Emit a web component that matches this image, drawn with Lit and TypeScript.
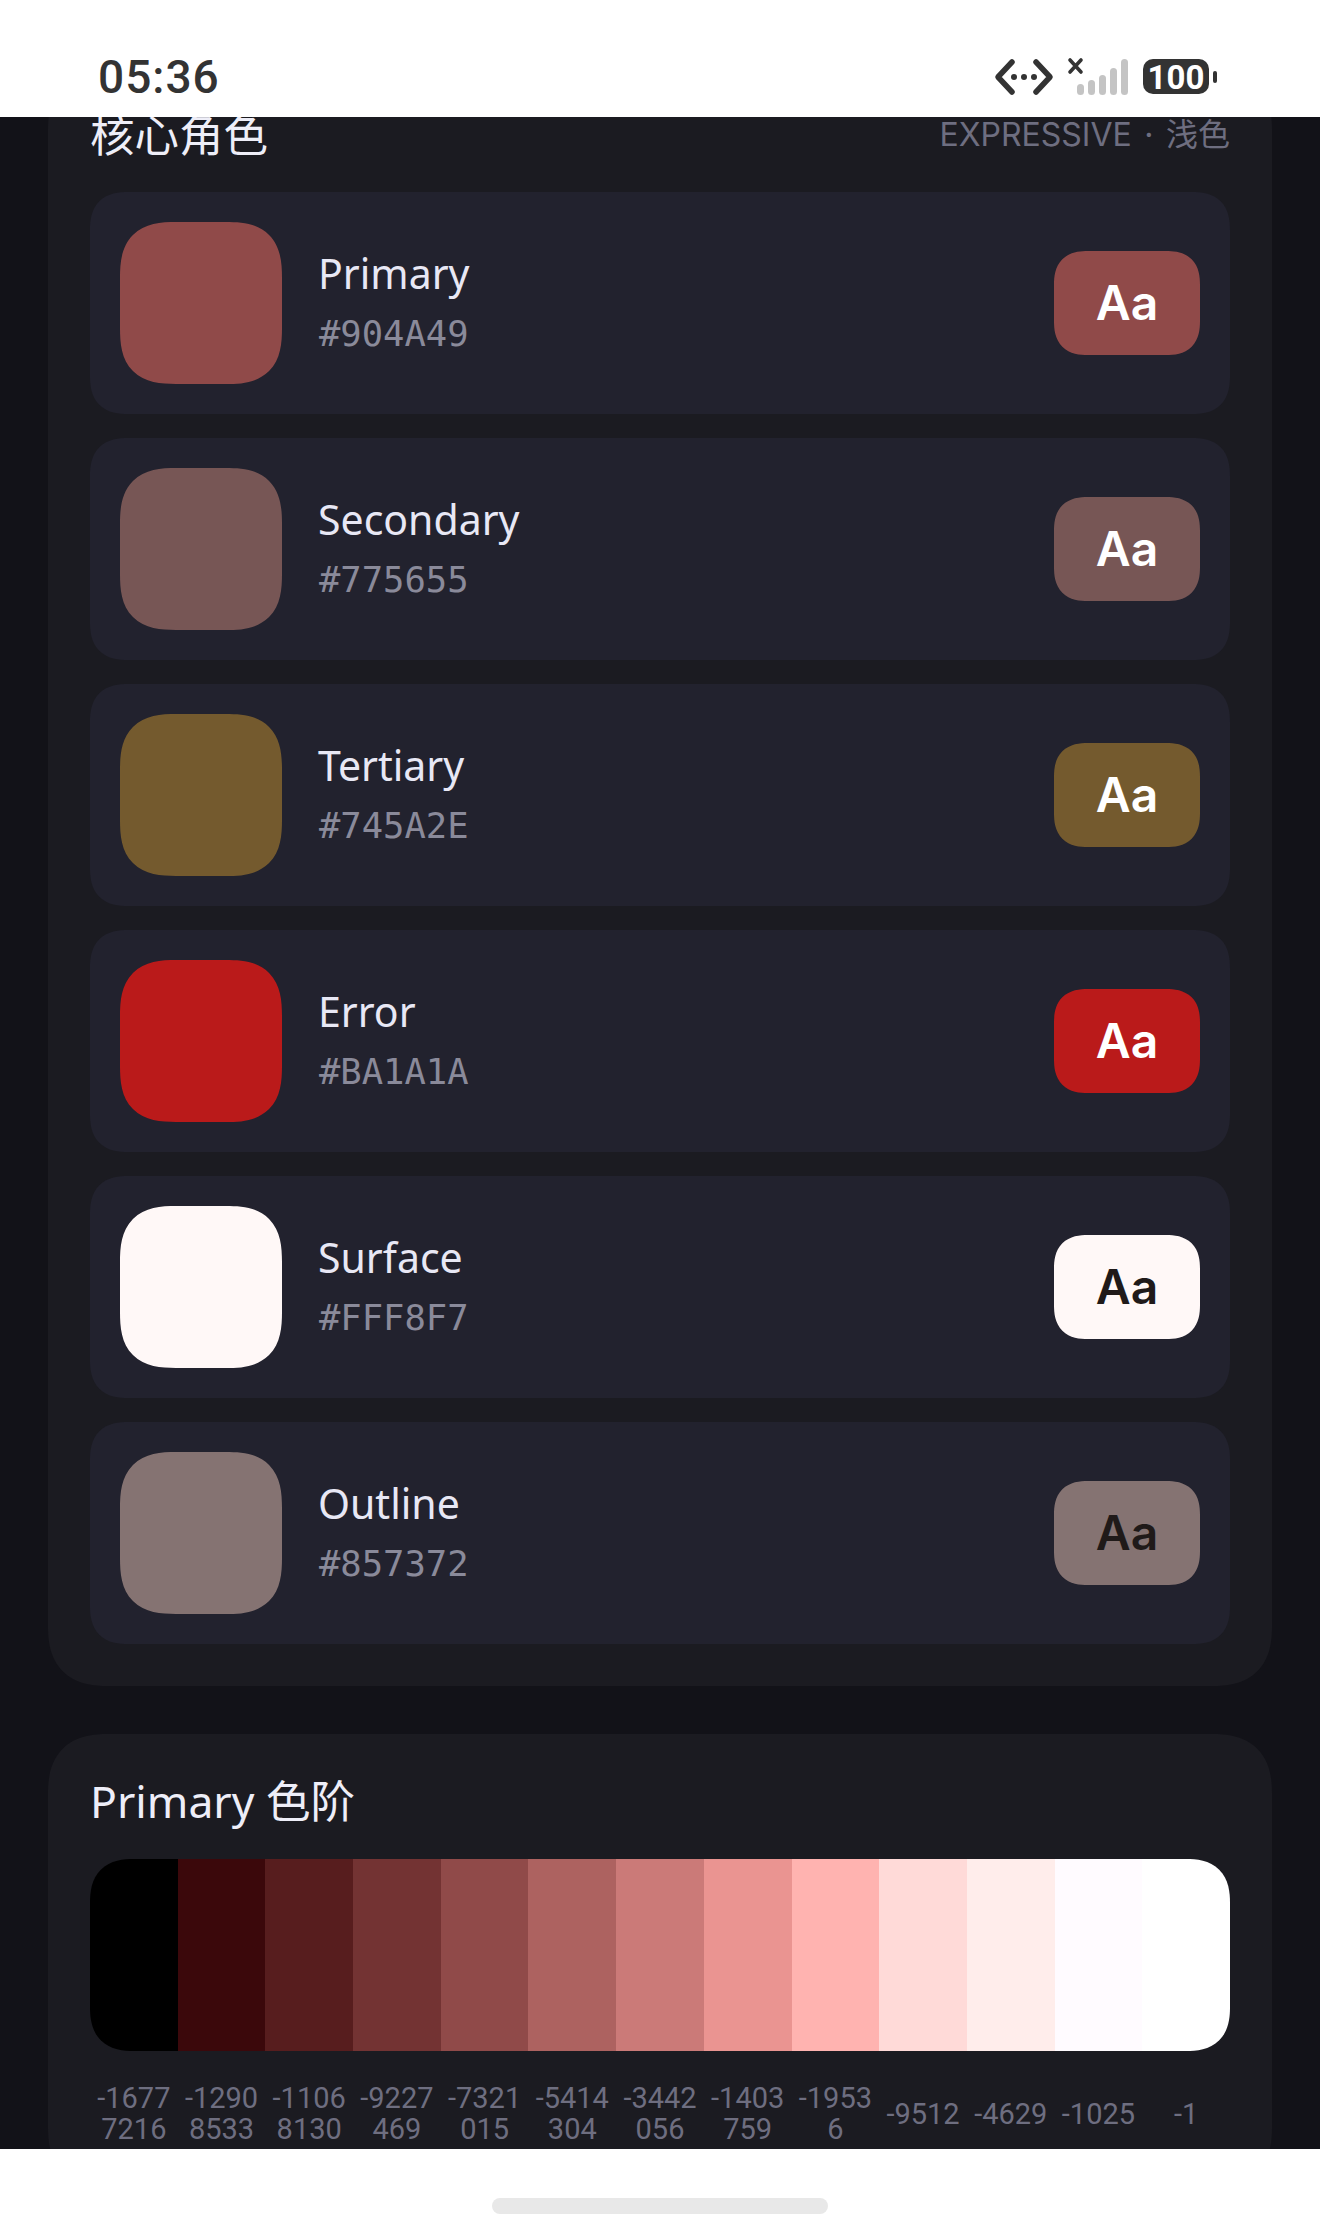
import { LitElement, html, css } from "lit";
import { customElement } from "lit/decorators.js";

const ROLES = [
  { name: "Primary", hex: "#904A49", ink: "#ffffff" },
  { name: "Secondary", hex: "#775655", ink: "#ffffff" },
  { name: "Tertiary", hex: "#745A2E", ink: "#ffffff" },
  { name: "Error", hex: "#BA1A1A", ink: "#ffffff" },
  { name: "Surface", hex: "#FFF8F7", ink: "#201a19" },
  { name: "Outline", hex: "#857372", ink: "#201a19" },
];
const TONES = [-16777216, -12908533, -11068130, -9227469, -7321015, -5414304, -3442056, -1403759, -19536, -9512, -4629, -1025, -1];
const toHex = (n: number) => "#" + ((n >>> 0) & 0xffffff).toString(16).padStart(6, "0");

@customElement("app-root")
export class AppRoot extends LitElement {
  static styles = css`
    :host { display: flex; flex-direction: column; width: 1320px; height: 2232px; background: #fff; font-family: "Noto Sans", "Noto Sans CJK SC", sans-serif; overflow: hidden; }
    .status { height: 117px; flex: none; background: #fff; display: flex; align-items: flex-start; justify-content: space-between; padding: 0 100px 0 98px; box-sizing: border-box; }
    .time { font: 500 46px/1 Roboto, sans-serif; color: #333; margin-top: 54px; letter-spacing: 1px; }
    .icons { display: block; margin-top: 50px; }
    .view { flex: 1; min-height: 0; overflow: hidden; background: #121218; padding: 0 48px; }
    .content { margin-top: -47px; display: flex; flex-direction: column; gap: 48px; }
    .card { background: #1b1b21; border-radius: 60px; padding: 42px; corner-shape: superellipse(1.3); }
    .scale-card { padding-top: 39px; }
    .head { display: flex; justify-content: space-between; align-items: flex-start; height: 56px; margin-bottom: 24px; }
    .title { font-size: 44.5px; line-height: 46px; color: #eeeef8; font-weight: 400; }
    .sub { font: 400 32px/46px Inter, "Noto Sans CJK SC", sans-serif; color: #6e6e80; word-spacing: 3.5px; }
    .rows { display: flex; flex-direction: column; gap: 24px; }
    .row { height: 222px; box-sizing: border-box; padding: 30px; background: #22222e; border-radius: 38px; display: flex; align-items: center; corner-shape: superellipse(1.3); }
    .swatch { width: 162px; height: 162px; border-radius: 56px; flex: none; corner-shape: superellipse(1.4); }
    .text { margin-left: 36px; flex: 1; padding-bottom: 6px; }
    .name { font-size: 41px; line-height: 58px; color: #e8e8f5; }
    .hex { font: 400 35.5px/44px "DejaVu Sans Mono", monospace; color: #8a8a9a; margin-top: 10px; margin-left: 1px; }
    .badge { width: 146px; height: 104px; border-radius: 34px; flex: none; display: flex; align-items: center; justify-content: center; font: 600 48px/1 Inter, sans-serif; corner-shape: superellipse(1.3); }
    .scale-title { margin-bottom: 30px; height: 56px; line-height: 56px; }
    .bar { display: grid; grid-template-columns: repeat(13, 1fr); height: 192px; border-radius: 44px; overflow: hidden; corner-shape: superellipse(1.3); }
    .labels { display: grid; grid-template-columns: repeat(13, 1fr); align-items: center; margin-top: 32px; }
    .label { font: 400 29px/31px Roboto, sans-serif; color: #6e6e80; text-align: center; word-break: break-all; padding: 0 2px; }
    .nav { height: 83px; flex: none; background: #fff; display: flex; justify-content: center; padding-top: 49px; box-sizing: border-box; }
    .pill { width: 336px; height: 16px; border-radius: 8px; background: #e8e8e8; }
  `;

  render() {
    return html`
      <div class="status">
        <div class="time">05:36</div>
        <svg class="icons" width="226" height="50" viewBox="994 50 226 50">
          <g fill="none" stroke="#333" stroke-width="5.5" stroke-linecap="round" stroke-linejoin="round">
            <path d="M1012 62L998 77L1012 92"/><path d="M1036 62L1050 77L1036 92"/>
          </g>
          <g fill="#333"><circle cx="1014" cy="77" r="3"/><circle cx="1024" cy="77" r="3"/><circle cx="1034" cy="77" r="3"/></g>
          <path d="M1070 60L1081 72M1081 60L1070 72" stroke="#333" stroke-width="3.6" stroke-linecap="round"/>
          <g fill="#c4c4c4">
            <rect x="1077" y="84" width="7" height="11" rx="3.5"/><rect x="1088" y="80" width="7" height="15" rx="3.5"/>
            <rect x="1099" y="75" width="7" height="20" rx="3.5"/><rect x="1110" y="68" width="7" height="27" rx="3.5"/>
            <rect x="1121" y="59" width="7" height="36" rx="3.5"/>
          </g>
          <rect x="1143" y="59" width="66" height="35" rx="10" fill="#333"/>
          <rect x="1213" y="71" width="4" height="12" rx="2" fill="#333"/>
          <text x="1176" y="88.5" text-anchor="middle" fill="#fff" font-family="Roboto, sans-serif" font-weight="700" font-size="33">100</text>
        </svg>
      </div>
      <div class="view">
        <div class="content">
          <section class="card">
            <div class="head"><span class="title">核心角色</span><span class="sub">EXPRESSIVE · 浅色</span></div>
            <div class="rows">
              ${ROLES.map(r => html`
                <div class="row">
                  <div class="swatch" style="background:${r.hex}"></div>
                  <div class="text"><div class="name">${r.name}</div><div class="hex">${r.hex}</div></div>
                  <div class="badge" style="background:${r.hex};color:${r.ink}">Aa</div>
                </div>`)}
            </div>
          </section>
          <section class="card scale-card">
            <div class="title scale-title">Primary 色阶</div>
            <div class="bar">${TONES.map(t => html`<div style="background:${toHex(t)}"></div>`)}</div>
            <div class="labels">${TONES.map(t => html`<div class="label">${t}</div>`)}</div>
          </section>
        </div>
      </div>
      <div class="nav"><div class="pill"></div></div>
    `;
  }
}
